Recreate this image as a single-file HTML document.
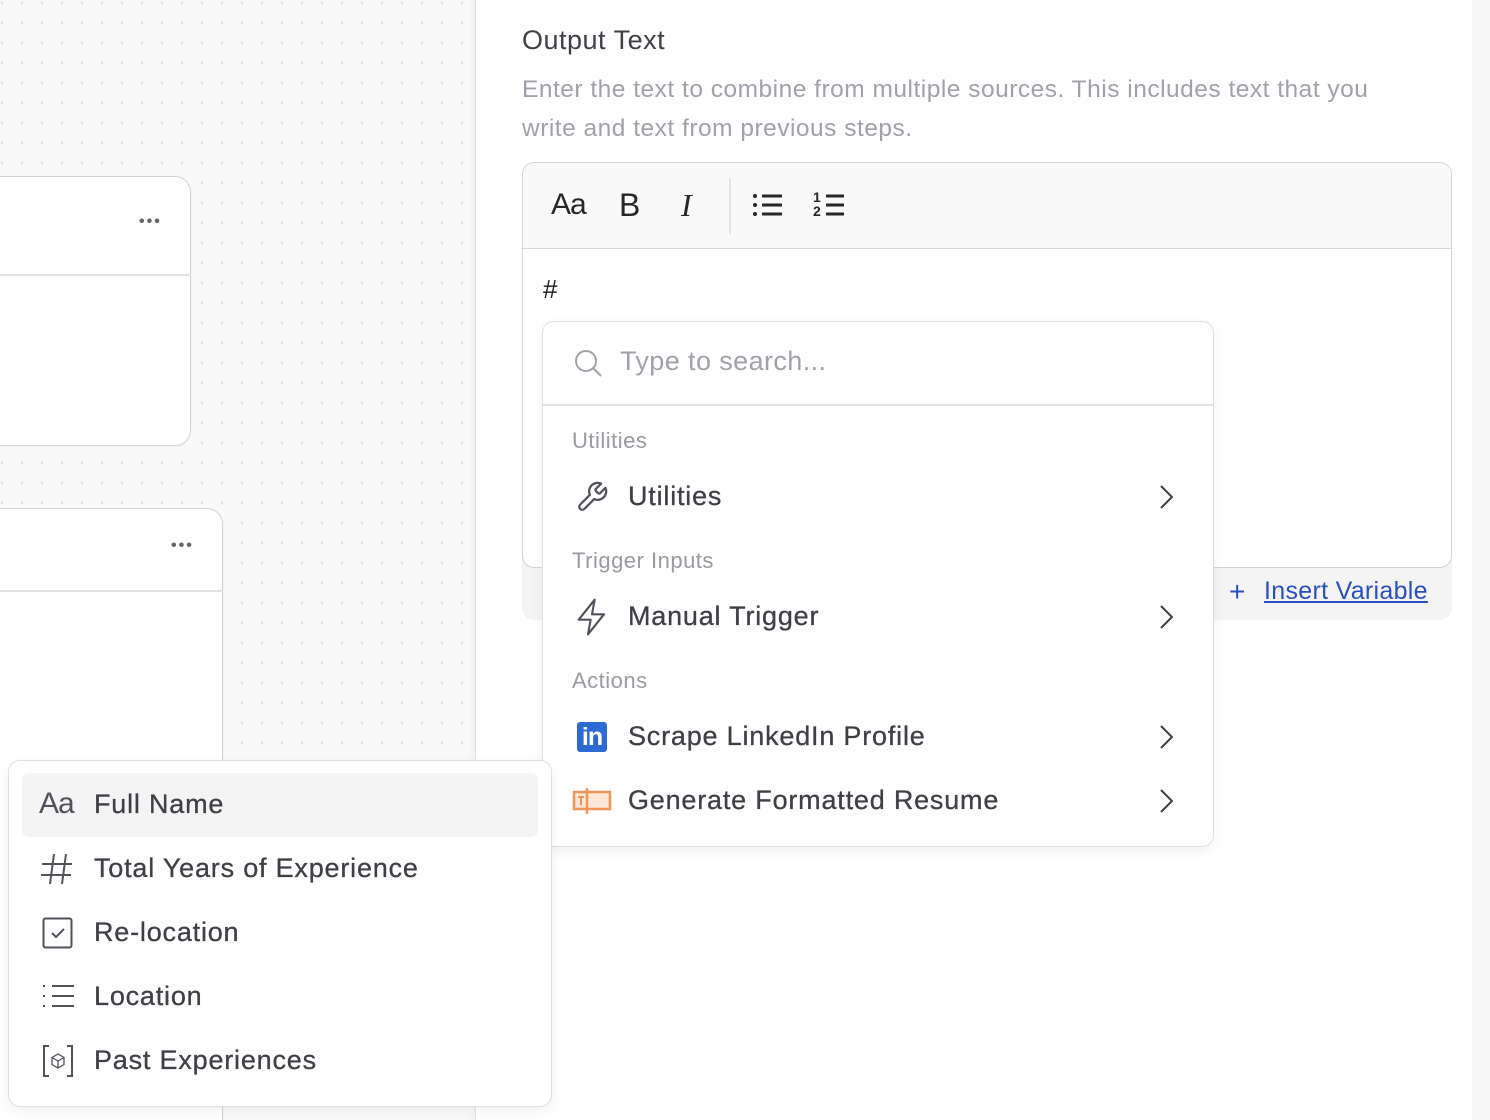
<!DOCTYPE html>
<html><head><meta charset="utf-8"><style>
*{box-sizing:border-box;margin:0;padding:0}
html,body{width:1490px;height:1120px;overflow:hidden}
body{position:relative;font-family:"Liberation Sans",sans-serif;background:#fff}
.canvas{position:absolute;left:0;top:0;width:476px;height:1120px;background-color:#f9f9f9;background-image:radial-gradient(circle,#e0e0e3 1.1px,transparent 1.5px);background-size:20px 20px;background-position:-8px -7px;border-right:1px solid #e2e2e4;box-shadow:inset -6px 0 8px -6px rgba(0,0,0,.06)}
.card{position:absolute;background:#fff;border:1.5px solid #d4d4d8;border-radius:16px;box-shadow:0 1px 2px rgba(0,0,0,.05)}
.dots{position:absolute;font-size:16px;color:#666;letter-spacing:2px;font-weight:bold}
.abs{position:absolute}
.panel{position:absolute;left:477px;top:0;width:995px;height:1120px;background:#fff}
.strip{position:absolute;left:1472px;top:0;width:18px;height:1120px;background:#f7f7f8}
.menu{position:absolute;background:#fff;border:1.5px solid #e0e0e3;border-radius:12px;box-shadow:0 4px 12px rgba(0,0,0,.06)}
.item{position:absolute;font-size:27px;color:#3f3f46;white-space:nowrap;letter-spacing:0.8px;-webkit-text-stroke:0.3px #3f3f46}
.lbl{position:absolute;font-size:22px;color:#9a9aa1;letter-spacing:0.5px}
svg{position:absolute}
</style></head><body>
<div class="canvas"></div>
<div class="card" style="left:-20px;top:176px;width:211px;height:270px;">
  <div class="abs" style="left:0;top:97px;width:210px;height:1.5px;background:#e4e4e7"></div>
</div>
<div class="dots" style="left:139px;top:213px;">•••</div>
<div class="card" style="left:-20px;top:508px;width:243px;height:620px;border-radius:16px 16px 0 0">
  <div class="abs" style="left:0;top:81px;width:242px;height:1.5px;background:#e4e4e7"></div>
</div>
<div class="dots" style="left:171px;top:537px;">•••</div>

<div class="panel"></div>
<div class="strip"></div>

<div class="abs" style="left:522px;top:25px;font-size:27px;color:#3f3f46;letter-spacing:0.5px">Output Text</div>
<div class="abs" style="left:522px;top:70px;font-size:24.5px;line-height:39px;color:#a1a1aa;white-space:nowrap;letter-spacing:0.5px">Enter the text to combine from multiple sources. This includes text that you<br>write and text from previous steps.</div>

<div class="abs" style="left:522px;top:540px;width:930px;height:80px;background:#f4f4f5;border-radius:0 0 12px 12px"></div>
<div class="abs" style="left:522px;top:162px;width:930px;height:406px;border:1.5px solid #d4d4d8;border-radius:12px;background:#fff;overflow:hidden">
  <div class="abs" style="left:0;top:0;width:930px;height:86px;background:#f9f9f9;border-bottom:1.5px solid #d9d9dc"></div>
</div>
<div class="abs" style="left:551px;top:188px;font-size:30px;color:#27272a;letter-spacing:-1px">Aa</div>
<div class="abs" style="left:619px;top:187px;font-size:32px;color:#27272a">B</div>
<div class="abs" style="left:681px;top:187px;font-size:32px;color:#27272a;font-style:italic;font-family:'Liberation Serif',serif">I</div>
<div class="abs" style="left:729px;top:178px;width:2px;height:56px;background:#e4e4e7"></div>
<svg style="left:752px;top:192px" width="32" height="28" viewBox="0 0 32 28" stroke="#27272a" stroke-width="3" fill="#27272a"><circle cx="3" cy="4" r="2" stroke="none"/><circle cx="3" cy="13" r="2" stroke="none"/><circle cx="3" cy="22" r="2" stroke="none"/><path d="M10 4H30M10 13H30M10 22H30"/></svg>
<div class="abs" style="left:813px;top:190px;font-size:14px;font-weight:bold;color:#27272a;line-height:14px">1<br>2</div>
<svg style="left:824px;top:192px" width="22" height="28" viewBox="0 0 22 28" stroke="#27272a" stroke-width="3"><path d="M2 4H20M2 13H20M2 22H20"/></svg>
<div class="abs" style="left:543px;top:274px;font-size:26px;color:#18181b">#</div>
<div class="abs" style="left:1229px;top:576px;font-size:28px;color:#2c4fc0">+</div>
<div class="abs" style="left:1264px;top:577px;font-size:25px;color:#2c4fc0;text-decoration:underline;letter-spacing:0.3px">Insert Variable</div>

<div class="menu" style="left:542px;top:321px;width:672px;height:526px;">
  <div class="abs" style="left:0;top:82px;width:670px;height:1.5px;background:#e4e4e7"></div>
</div>
<svg style="left:573px;top:348px" width="30" height="30" viewBox="0 0 30 30" fill="none" stroke="#a1a1aa" stroke-width="2"><circle cx="13" cy="13" r="10"/><path d="M20.5 20.5L28 28"/></svg>
<div class="abs" style="left:620px;top:346px;font-size:27px;color:#a1a1aa;letter-spacing:0.4px">Type to search...</div>
<div class="lbl" style="left:572px;top:428px">Utilities</div>
<svg style="left:575px;top:480px" width="34" height="34" viewBox="0 0 24 24" fill="none" stroke="#52525b" stroke-width="1.6" stroke-linecap="round" stroke-linejoin="round"><path d="M14.7 6.3a1 1 0 0 0 0 1.4l1.6 1.6a1 1 0 0 0 1.4 0l3.77-3.77a6 6 0 0 1-7.94 7.94l-6.91 6.91a2.12 2.12 0 0 1-3-3l6.91-6.91a6 6 0 0 1 7.94-7.94l-3.76 3.76z"/></svg>
<div class="item" style="left:628px;top:481px">Utilities</div>
<div class="lbl" style="left:572px;top:548px">Trigger Inputs</div>
<svg style="left:576px;top:598px" width="32" height="38" viewBox="0 0 24 28" fill="none" stroke="#52525b" stroke-width="1.6" stroke-linejoin="round"><path d="M14 1L2 16h9l-2 11 12-15h-9z"/></svg>
<div class="item" style="left:628px;top:601px">Manual Trigger</div>
<div class="lbl" style="left:572px;top:668px">Actions</div>
<div class="abs" style="left:577px;top:722px;width:30px;height:30px;background:#2d6ad4;border-radius:3px;color:#fff;font-weight:bold;font-size:25px;line-height:30px;text-align:center;letter-spacing:-1px">in</div>
<div class="item" style="left:628px;top:721px">Scrape LinkedIn Profile</div>
<svg style="left:572px;top:787px" width="40" height="28" viewBox="0 0 40 28" fill="none" stroke="#f0965a" stroke-width="2.5"><rect x="2" y="5" width="36" height="17" fill="#fde6d6"/><path d="M15 1V27"/><path d="M6 10h6M9 10v8" stroke-width="2"/></svg>
<div class="item" style="left:628px;top:785px">Generate Formatted Resume</div>
<svg style="left:1158px;top:484px" width="18" height="26" viewBox="0 0 18 26" fill="none" stroke="#3f3f46" stroke-width="2"><path d="M3 2l11 11-11 11"/></svg>
<svg style="left:1158px;top:604px" width="18" height="26" viewBox="0 0 18 26" fill="none" stroke="#3f3f46" stroke-width="2"><path d="M3 2l11 11-11 11"/></svg>
<svg style="left:1158px;top:724px" width="18" height="26" viewBox="0 0 18 26" fill="none" stroke="#3f3f46" stroke-width="2"><path d="M3 2l11 11-11 11"/></svg>
<svg style="left:1158px;top:788px" width="18" height="26" viewBox="0 0 18 26" fill="none" stroke="#3f3f46" stroke-width="2"><path d="M3 2l11 11-11 11"/></svg>

<div class="menu" style="left:8px;top:760px;width:544px;height:347px;"></div>
<div class="abs" style="left:22px;top:773px;width:516px;height:64px;background:#f4f4f5;border-radius:7px"></div>
<div class="abs" style="left:39px;top:787px;font-size:30px;color:#52525b;letter-spacing:-1px">Aa</div>
<div class="item" style="left:94px;top:789px">Full Name</div>
<svg style="left:40px;top:852px" width="34" height="34" viewBox="0 0 34 34" fill="none" stroke="#52525b" stroke-width="2"><path d="M14 2L10 32M26 2L22 32M2 12H32M1 23H31"/></svg>
<div class="item" style="left:94px;top:853px">Total Years of Experience</div>
<svg style="left:42px;top:917px" width="32" height="32" viewBox="0 0 32 32" fill="none" stroke="#52525b" stroke-width="2"><rect x="1.5" y="1.5" width="28" height="29" rx="2"/><path d="M10 16l4 4 8-8"/></svg>
<div class="item" style="left:94px;top:917px">Re-location</div>
<svg style="left:42px;top:984px" width="34" height="26" viewBox="0 0 34 26" fill="none" stroke="#52525b" stroke-width="2"><path d="M1 2h2M1 12h2M1 22h2M10 2h22M10 12h22M10 22h22"/></svg>
<div class="item" style="left:94px;top:981px">Location</div>
<svg style="left:42px;top:1045px" width="32" height="32" viewBox="0 0 32 32" fill="none" stroke="#52525b" stroke-width="2"><path d="M7 1H2V31H7M25 1H30V31H25"/><path d="M16 9l6 3.5v7L16 23l-6-3.5v-7zM10 12.5l6 3.5 6-3.5M16 16v7" stroke-width="1.3"/></svg>
<div class="item" style="left:94px;top:1045px">Past Experiences</div>
</body></html>
